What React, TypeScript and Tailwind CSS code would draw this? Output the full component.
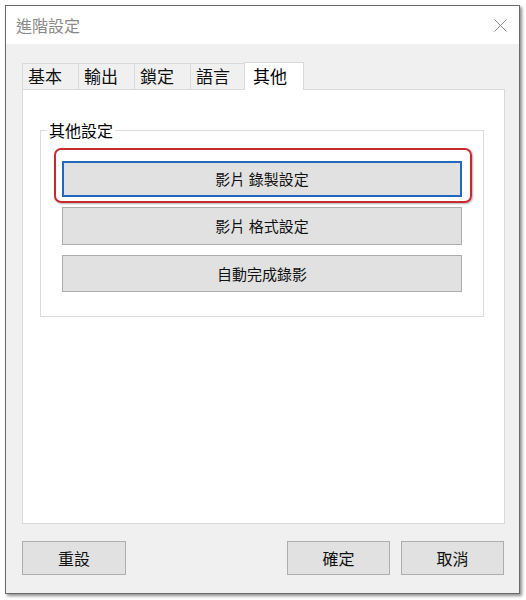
import React from "react";

const tabs = ["基本", "輸出", "鎖定", "語言", "其他"];
const font = { fontFamily: '"Noto Sans CJK TC", "Noto Sans", sans-serif' };

const App = () => {
  return (
    <div className="w-[526px] h-[600px] bg-white p-[5px]" style={font}>
      <div className="w-[515px] h-[589px] flex flex-col border border-[#6a6a6a] shadow-[2px_2px_3px_rgba(0,0,0,0.45)]">
        {/* title bar */}
        <div className="h-[38px] bg-white flex items-center justify-between pl-[10px] pr-[12px]">
          <span className="text-[16px] leading-[20px] text-[#8a8a8a]">進階設定</span>
          <svg width="13" height="13" viewBox="0 0 13 13" className="mt-[1px]">
            <path d="M0.5 0.5 L12.5 12.5 M12.5 0.5 L0.5 12.5" stroke="#8c8c8c" strokeWidth="1" />
          </svg>
        </div>

        {/* body */}
        <div className="flex-1 bg-[#f0f0f0] flex flex-col pt-[17px] pl-[16px] pr-[14px] pb-[18px]">
          <div className="flex items-end h-[28px]">
            {tabs.map((t, i) =>
              i === tabs.length - 1 ? (
                <div
                  key={t}
                  className="relative z-10 -ml-[2px] -mb-px h-[28px] w-[60px] bg-white border border-b-0 border-[#d9d9d9] pl-[8px] text-[17px] leading-[26px] text-black"
                >
                  {t}
                </div>
              ) : (
                <div
                  key={t}
                  className="-mr-px h-[26px] w-[57px] bg-[#f0f0f0] border border-b-0 border-[#d9d9d9] pl-[5px] text-[17px] leading-[24px] text-[#111]"
                >
                  {t}
                </div>
              )
            )}
          </div>

          <div className="h-[435px] bg-white border border-[#d9d9d9] pt-[31px] pl-[17px] pr-[20px]">
            <fieldset className="border border-[#dcdcdc] px-0 pb-[24px] m-0 min-w-0">
              <legend className="ml-[6px] px-[2px] text-[16px] leading-[18px] text-black">其他設定</legend>
              <div className="flex flex-col pl-[21px] pr-[21px] pt-[10px]">
                <div className="-ml-[8px] -mr-[10px] -mt-[1px] pl-[6px] pr-[8px] pt-[11px] pb-[4px] border-2 border-[#c62b30] rounded-[7px] shadow-[1px_1px_2px_rgba(0,0,0,0.3)]">
                  <button className="w-full h-[36px] bg-[#e1e1e1] border-2 border-[#2468bd] text-[15px] leading-[20px] text-[#111]">
                    影片 錄製設定
                  </button>
                </div>
                <button className="mt-[4px] w-full h-[38px] bg-[#e1e1e1] border border-[#adadad] text-[15px] leading-[20px] text-[#111]">
                  影片 格式設定
                </button>
                <button className="mt-[10px] w-full h-[37px] bg-[#e1e1e1] border border-[#adadad] text-[15px] leading-[20px] text-[#111]">
                  自動完成錄影
                </button>
              </div>
            </fieldset>
          </div>

          <div className="flex items-center mt-[17px] pr-[1px]">
            <button className="w-[104px] h-[34px] bg-[#e1e1e1] border border-[#adadad] text-[16px] leading-[20px] text-[#111]">
              重設
            </button>
            <div className="flex-1" />
            <button className="w-[103px] h-[34px] bg-[#e1e1e1] border border-[#adadad] text-[16px] leading-[20px] text-[#111]">
              確定
            </button>
            <button className="ml-[11px] w-[103px] h-[34px] bg-[#e1e1e1] border border-[#adadad] text-[16px] leading-[20px] text-[#111]">
              取消
            </button>
          </div>
        </div>
      </div>
    </div>
  );
};

export default App;
